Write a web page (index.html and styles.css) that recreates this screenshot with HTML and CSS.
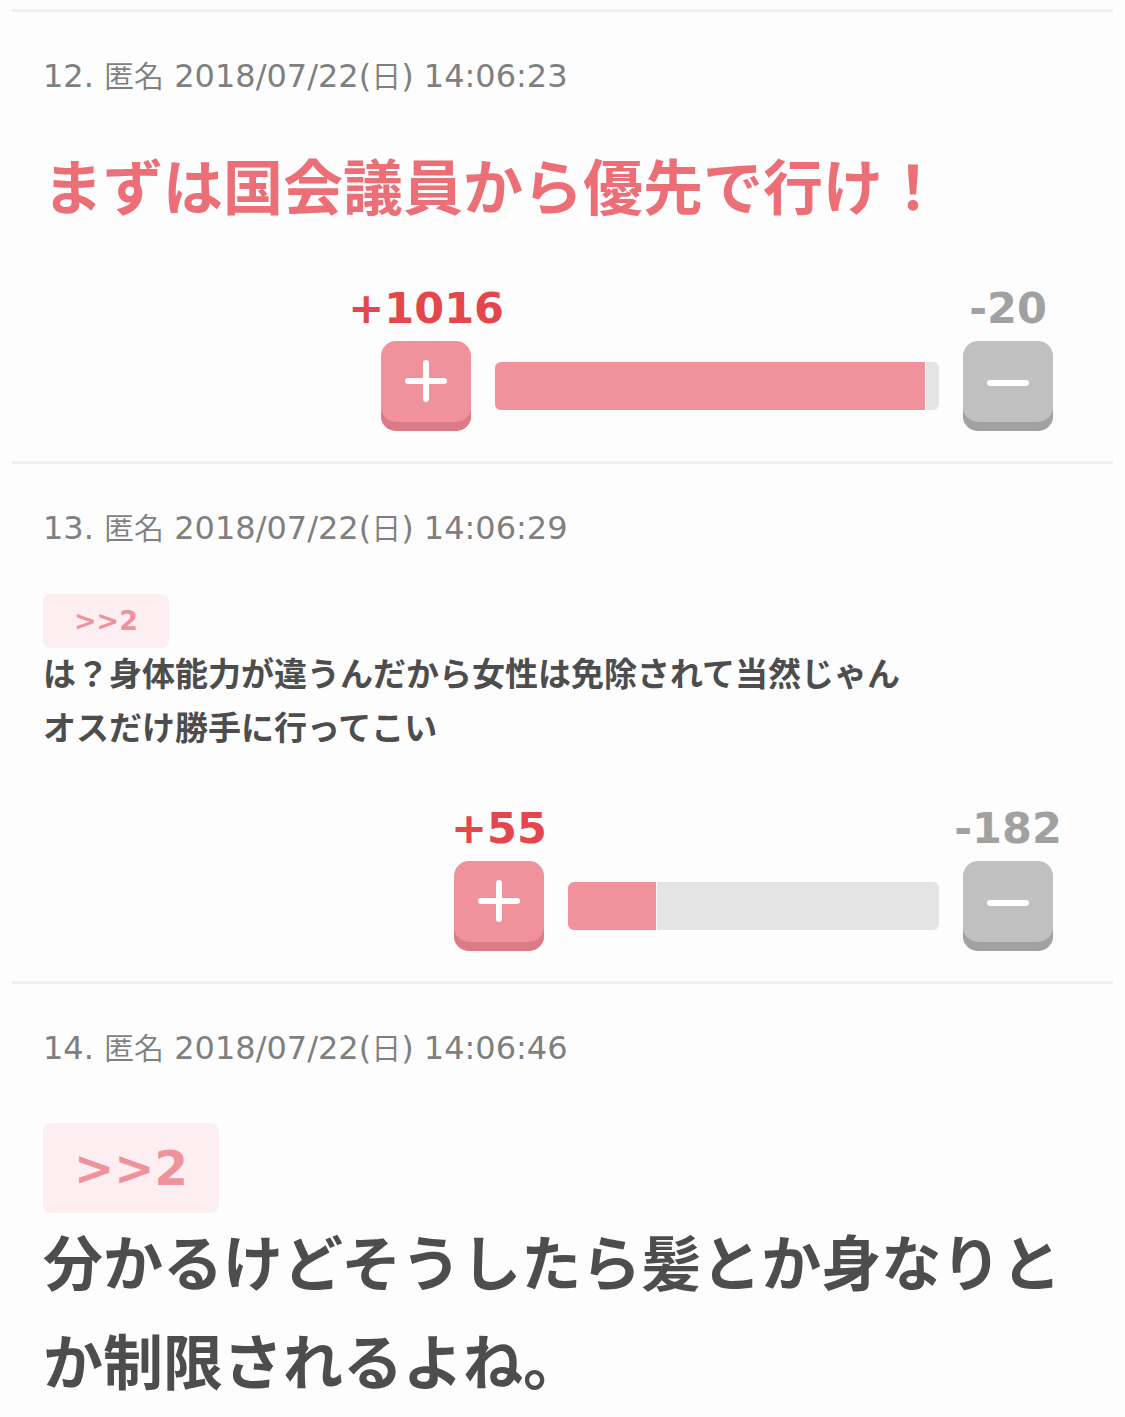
FILE: index.html
```html
<!DOCTYPE html>
<html lang="ja">
<head>
<meta charset="utf-8">
<meta name="viewport" content="width=device-width, initial-scale=1">
<title>コメント</title>
<link rel="stylesheet" href="styles.css">
</head>
<body>
<main class="comments">
  <article class="comment">
    <header class="meta">12. <span class="kanji">匿名</span> 2018/07/22(<span class="kanji">日</span>) 14:06:23</header>
    <p class="text text-top">まずは国会議員から優先で行け！</p>
    <div class="votes" style="width: 64.6%">
      <span class="count count-plus">+1016</span>
      <span class="count count-minus">-20</span>
      <button class="vote vote-plus" type="button" aria-label="プラス"><svg viewBox="0 0 90 90"><path d="M27 40H63M45 22V58"/></svg></button>
      <div class="bar"><div class="fill" style="width: 97%"></div></div>
      <button class="vote vote-minus" type="button" aria-label="マイナス"><svg viewBox="0 0 90 90"><path d="M27 42H63"/></svg></button>
    </div>
  </article>

  <article class="comment">
    <header class="meta">13. <span class="kanji">匿名</span> 2018/07/22(<span class="kanji">日</span>) 14:06:29</header>
    <div class="quote"><a class="anchor" href="#comment-2">&gt;&gt;2</a></div>
    <p class="text">は？身体能力が違うんだから女性は免除されて当然じゃん<br>オスだけ勝手に行ってこい</p>
    <div class="votes" style="width: 57.6%">
      <span class="count count-plus">+55</span>
      <span class="count count-minus">-182</span>
      <button class="vote vote-plus" type="button" aria-label="プラス"><svg viewBox="0 0 90 90"><path d="M27 40H63M45 22V58"/></svg></button>
      <div class="bar"><div class="fill" style="width: 24%"></div></div>
      <button class="vote vote-minus" type="button" aria-label="マイナス"><svg viewBox="0 0 90 90"><path d="M27 42H63"/></svg></button>
    </div>
  </article>

  <article class="comment">
    <header class="meta">14. <span class="kanji">匿名</span> 2018/07/22(<span class="kanji">日</span>) 14:06:46</header>
    <div class="quote quote-large"><a class="anchor" href="#comment-2">&gt;&gt;2</a></div>
    <p class="text text-large">分かるけどそうしたら髪とか身なりとか制限されるよね。</p>
  </article>
</main>
</body>
</html>
```
FILE: styles.css
```css
* {
  box-sizing: border-box;
}

body {
  margin: 0;
  background: #fdfdfd;
  color: #4d4d4d;
  font-family: "DejaVu Sans", "Noto Sans CJK JP", sans-serif;
}

.comments {
  padding: 9px 12px 0;
}

.comment {
  padding: 40px 30px 30px 31px;
  border-top: 3px solid #efefef;
}

.comment:last-child {
  padding-bottom: 0;
}

.meta {
  margin-bottom: 42px;
  color: #7f7f7f;
  font-size: 32px;
  line-height: 48px;
}

.kanji {
  font-family: "Noto Sans CJK JP", sans-serif;
  font-size: 30px;
  font-weight: 350;
  line-height: 1;
}

.text {
  margin: 0;
  font-family: "Noto Sans CJK JP", sans-serif;
  font-size: 33px;
  font-weight: 700;
  line-height: 54px;
}

.quote + .text {
  margin-top: -3px;
  padding-bottom: 3px;
}

.text-large {
  font-size: 60px;
  line-height: 99px;
}

.text-top {
  padding-bottom: 10px;
  color: #ec6f77;
  font-size: 60px;
  line-height: 84px;
}

.quote {
  display: flex;
  font-size: 27px;
  line-height: 54px;
}

.anchor {
  padding: 0 31px;
  border-radius: 8px;
  background: #fceef1;
  color: #ee929d;
  font-weight: 700;
  text-decoration: none;
}

.quote-large {
  padding-top: 9px;
  font-size: 48px;
  line-height: 90px;
}

.votes {
  display: grid;
  grid-template-columns: 90px 1fr 90px;
  grid-template-rows: 48px 90px;
  gap: 9px 24px;
  align-items: center;
  margin: 48px 30px 0 auto;
}

.count {
  justify-self: center;
  font-size: 43px;
  font-weight: 700;
  line-height: 48px;
  white-space: nowrap;
}

.count-plus {
  color: #e5464c;
}

.count-minus {
  grid-column: 3;
  color: #a1a1a1;
}

.vote {
  width: 90px;
  height: 90px;
  padding: 0;
  border: 0;
  border-radius: 15px;
  cursor: pointer;
}

.vote-plus {
  background: #ef929b;
  box-shadow: inset 0 -9px #dc7b87;
}

.vote-minus {
  background: #c0c0c0;
  box-shadow: inset 0 -9px #a1a1a1;
}

.vote svg {
  display: block;
  fill: none;
  stroke: #fff;
  stroke-width: 6;
  stroke-linecap: round;
}

.bar {
  height: 48px;
  overflow: hidden;
  border-radius: 6px;
  background: #e4e4e4;
}

.fill {
  height: 100%;
  border-right: 1px solid #fdfdfd;
  background: #ef929b;
}
```
